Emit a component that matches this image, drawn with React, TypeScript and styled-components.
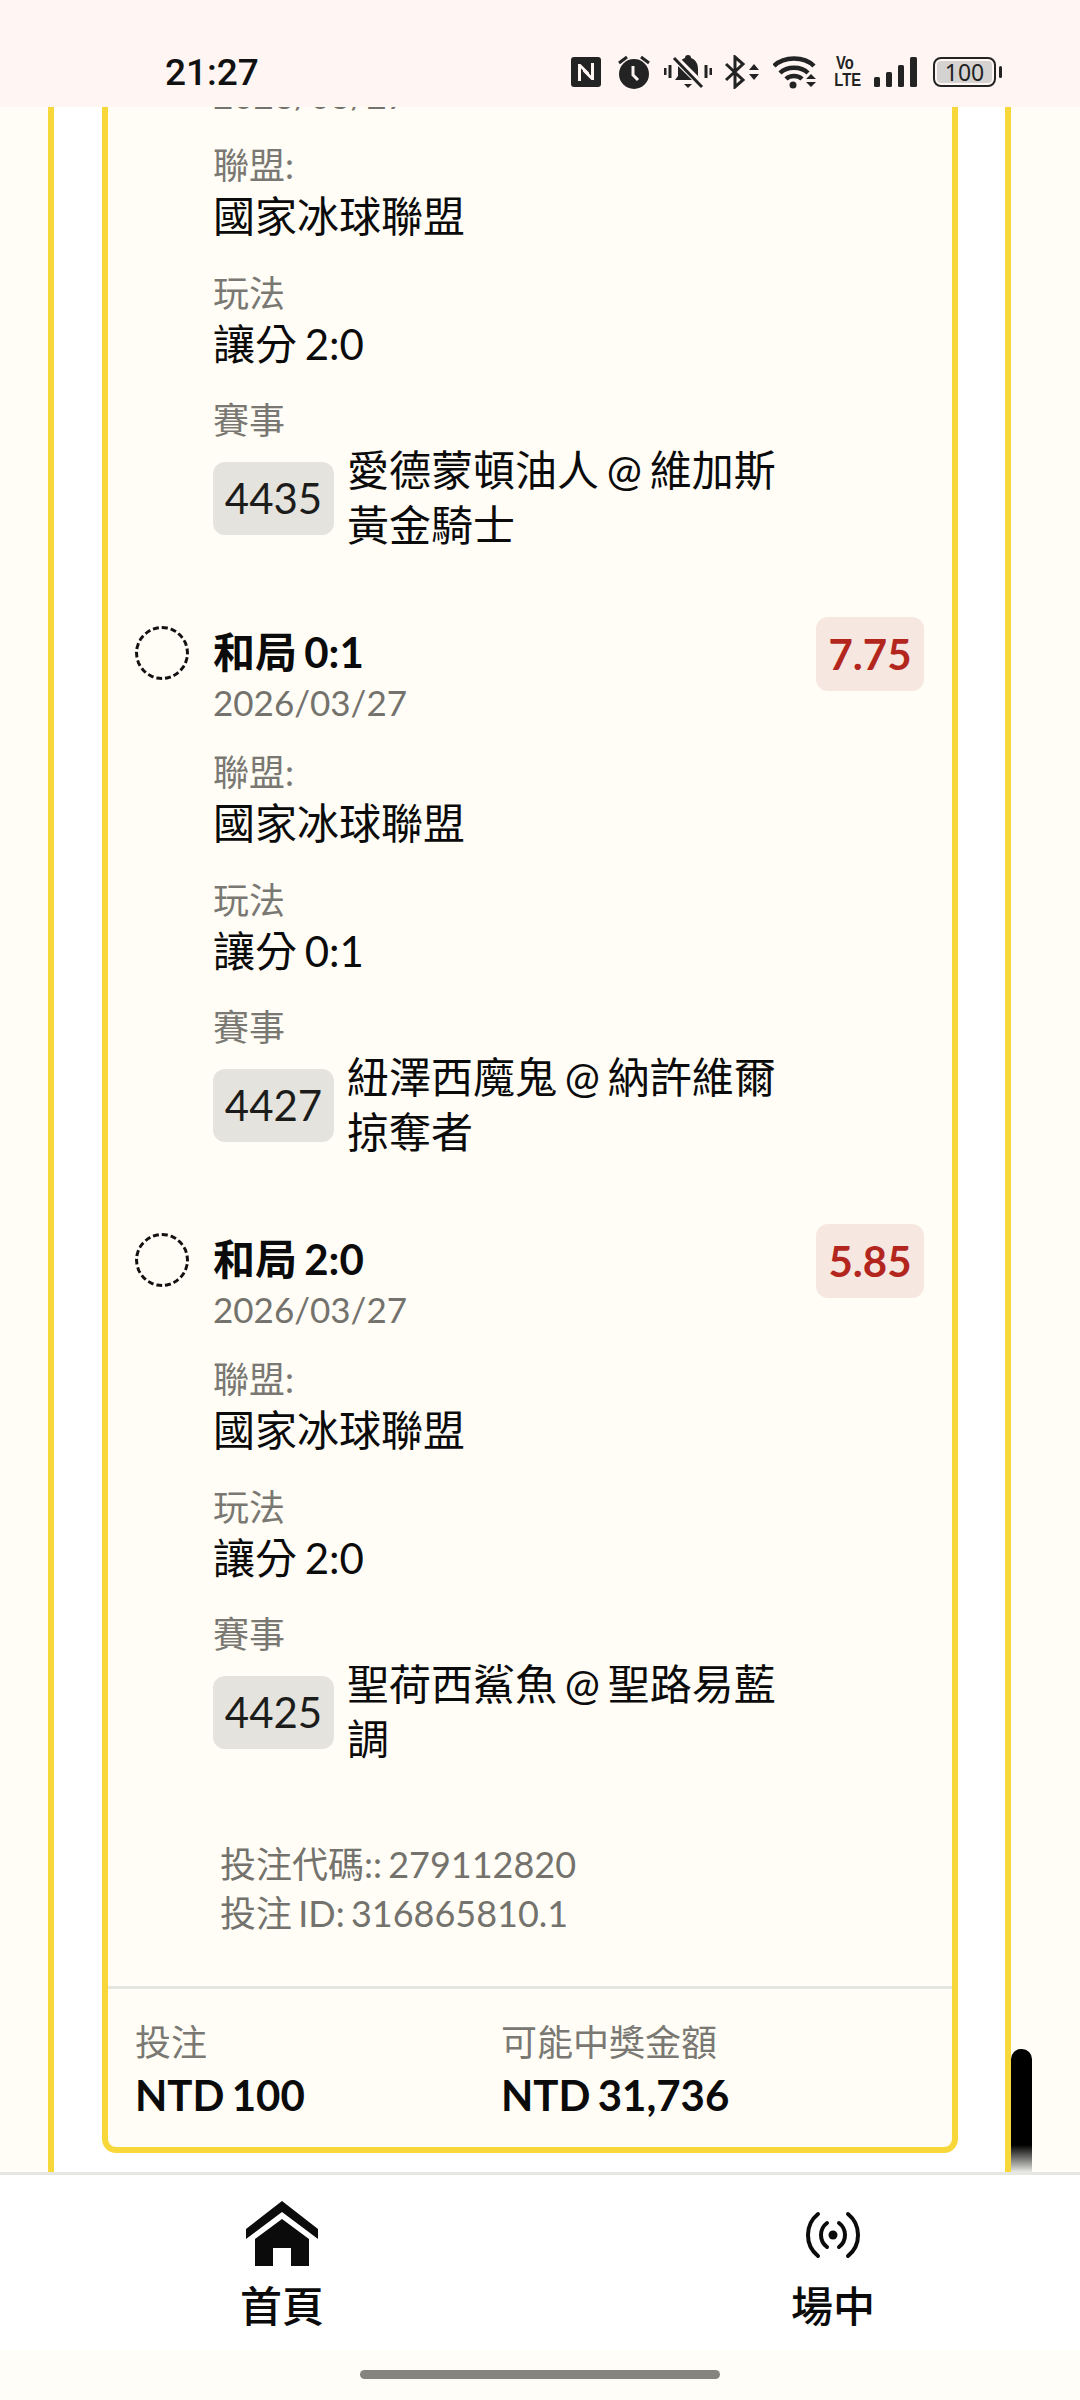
import React from "react";
import styled, { createGlobalStyle } from "styled-components";

const GlobalStyle = createGlobalStyle`
  html, body { margin: 0; padding: 0; background: #fffdf6; }
  body { font-family: Lato, "Noto Sans CJK TC", sans-serif; word-spacing: -3px; }
  * { box-sizing: border-box; }
`;

const YELLOW = "#f8d73a";
const ICON = "#232323";

const Page = styled.div`
  width: 1080px;
  height: 2400px;
  display: flex;
  flex-direction: column;
  overflow: hidden;
  background: #fffdf6;
`;

const StatusBar = styled.header`
  position: relative;
  z-index: 1;
  flex: 0 0 107px;
  display: flex;
  align-items: center;
  justify-content: space-between;
  padding: 37px 77px 0 165px;
  background: #fff6f4;
`;

const Clock = styled.span`
  font-family: Roboto, sans-serif;
  font-size: 37px;
  font-weight: 500;
  color: #111;
`;

const StatusIcons = styled.div`
  display: flex;
  align-items: center;
`;

const StatusGlyph = styled.svg<{ $ml: number }>`
  display: block;
  margin-left: ${(p) => p.$ml}px;
  flex: none;
`;

const VoLte = styled.div`
  width: 26px;
  margin-left: 13px;
  font-family: "Liberation Sans", sans-serif;
  font-weight: 700;
  font-size: 18px;
  line-height: 17px;
  text-align: center;
  color: ${ICON};
`;

const VoLteLine = styled.div`
  transform: scaleX(0.82);
`;

const Battery = styled.div`
  position: relative;
  width: 63px;
  height: 30px;
  margin: 0 7px 0 16px;
  border: 2.5px solid ${ICON};
  border-radius: 8px;
  padding: 2px;
  &::after {
    content: "";
    position: absolute;
    right: -8px;
    top: 7px;
    width: 3px;
    height: 12px;
    border-radius: 2px;
    background: ${ICON};
  }
`;

const BatteryFill = styled.div`
  height: 100%;
  border-radius: 4px;
  background: #d5d3d2;
  display: flex;
  align-items: center;
  justify-content: center;
  font-family: "Noto Sans", sans-serif;
  font-size: 23px;
  color: #222;
`;

const Main = styled.main`
  flex: 1;
  min-height: 0;
  position: relative;
  display: flex;
  flex-direction: column;
  justify-content: flex-end;
  overflow: hidden;
`;

const Panel = styled.section`
  flex: none;
  width: 963px;
  margin-left: 48px;
  padding: 0 47px 19px 48px;
  background: #fff;
  border-left: 6px solid ${YELLOW};
  border-right: 6px solid ${YELLOW};
`;

const Card = styled.article`
  width: 856px;
  background: #fffdf6;
  border: 6px solid ${YELLOW};
  border-radius: 14px;
`;

const Items = styled.div`
  display: flex;
  flex-direction: column;
  gap: 73px;
  padding: 0 28px 0 27px;
`;

const Item = styled.div`
  display: flex;
  align-items: flex-start;
  gap: 24px;
`;

const Radio = styled.span`
  flex: none;
  width: 54px;
  height: 54px;
  border: 3px dashed #111;
  border-radius: 50%;
`;

const Body = styled.div`
  flex: 1;
  min-width: 0;
`;

const Head = styled.div`
  display: flex;
  justify-content: space-between;
  align-items: flex-start;
`;

const Title = styled.div`
  min-height: 52px;
  font-size: 42px;
  line-height: 52px;
  font-weight: 700;
  color: #0b0b0b;
`;

const DateText = styled.div`
  font-size: 35px;
  line-height: 48px;
  color: #74726c;
`;

const Odds = styled.div`
  width: 108px;
  height: 74px;
  margin-top: -9px;
  display: flex;
  align-items: center;
  justify-content: center;
  border-radius: 12px;
  background: #f6e7e1;
  color: #b3261e;
  font-size: 42px;
  font-weight: 700;
`;

const Field = styled.div<{ $top: number }>`
  margin-top: ${(p) => p.$top}px;
`;

const Label = styled.div`
  font-size: 36px;
  line-height: 48px;
  color: #7a7872;
`;

const Value = styled.div`
  margin-top: 1px;
  font-size: 42px;
  line-height: 52px;
  color: #0b0b0b;
`;

const EventRow = styled.div`
  display: flex;
  align-items: center;
  gap: 13px;
  margin-top: -1px;
`;

const Pill = styled.span`
  flex: none;
  width: 121px;
  height: 73px;
  display: flex;
  align-items: center;
  justify-content: center;
  border-radius: 12px;
  background: #e4e3de;
  color: #1c1c1a;
  font-size: 42px;
`;

const EventName = styled.div`
  max-width: 445px;
  font-size: 42px;
  line-height: 55px;
  color: #0b0b0b;
`;

const Codes = styled.div`
  margin-top: 73px;
  padding-left: 112px;
  font-size: 36px;
  line-height: 49px;
  color: #74726c;
`;

const Divider = styled.hr`
  margin: 48px 0 0;
  border: 0;
  height: 3px;
  background: #e6e6e1;
`;

const Summary = styled.div`
  display: grid;
  grid-template-columns: 366px 1fr;
  padding: 29px 27px 23px;
`;

const SummaryValue = styled.div`
  font-size: 42px;
  line-height: 58px;
  font-weight: 700;
  color: #0b0b0b;
`;

const SummaryLabel = styled.div`
  font-size: 36px;
  line-height: 48px;
  color: #7a7872;
`;

const ScrollThumb = styled.div`
  position: absolute;
  left: 1011px;
  bottom: 0;
  width: 21px;
  height: 123px;
  border-radius: 10px 10px 0 0;
  background: linear-gradient(to bottom, #000 0%, #000 78%, #e8e8e4 100%);
`;

const Nav = styled.nav`
  flex: 0 0 228px;
  display: flex;
  flex-direction: column;
  border-top: 3px solid #e6e6e3;
  background: #fff;
`;

const NavItems = styled.div`
  flex: 1;
  display: flex;
  gap: 431px;
  padding-left: 222px;
`;

const NavItem = styled.div<{ $top: number }>`
  width: 120px;
  display: flex;
  flex-direction: column;
  align-items: center;
  padding-top: ${(p) => p.$top}px;
`;

const NavLabel = styled.span<{ $top: number }>`
  margin-top: ${(p) => p.$top}px;
  font-size: 42px;
  line-height: 52px;
  font-weight: 500;
  color: #0b0b0b;
`;

const GestureArea = styled.div`
  flex: 0 0 50px;
  display: flex;
  justify-content: center;
  padding-top: 20px;
  background: #fffdf8;
`;

const GestureBar = styled.div`
  width: 360px;
  height: 9px;
  border-radius: 5px;
  background: #85847e;
`;

const NfcIcon = () => (
  <StatusGlyph $ml={0} width="30" height="30" viewBox="0 0 30 30">
    <rect width="30" height="30" rx="3" fill={ICON} />
    <path d="M7 24V7h2.500L18 15.500V19.500L10 11.500V24z" fill="#fff6f4" />
    <path d="M23 6v17h-2.500L12 14.500V10.500l8 8V6z" fill="#fff6f4" />
  </StatusGlyph>
);

const AlarmIcon = () => (
  <StatusGlyph $ml={17} width="32" height="34" viewBox="0 0 32 34">
    <circle cx="16" cy="19" r="15" fill={ICON} />
    <path d="M1 8l8-6M31 8l-8-6" stroke={ICON} strokeWidth="3" />
    <path d="M15 11v9l5 5" stroke="#fff6f4" strokeWidth="3" fill="none" />
  </StatusGlyph>
);

const MuteIcon = () => (
  <StatusGlyph $ml={14} width="48" height="34" viewBox="0 0 48 34">
    <path d="M24 0c2 0 3 1 3 3 5 2 7 6 7 11v7l3 4H11l3-4v-7c0-5 2-9 7-11 0-2 1-3 3-3z" fill={ICON} />
    <path d="M20 29h8l-4 4z" fill={ICON} />
    <path d="M1 13v7M6 10v13M42 10v13M47 13v7" stroke={ICON} strokeWidth="3" />
    <path d="M9 1l29 29" stroke="#fff6f4" strokeWidth="7" />
    <path d="M10 3l28 29" stroke={ICON} strokeWidth="3" />
  </StatusGlyph>
);

const BluetoothIcon = () => (
  <StatusGlyph $ml={13} width="34" height="34" viewBox="0 0 34 34">
    <path d="M1 9l17 16-8 7V2l8 7L1 25" stroke={ICON} strokeWidth="3" fill="none" />
    <path d="M24 15l5-6 5 6zM24 19h10l-5 6z" fill={ICON} />
  </StatusGlyph>
);

const WifiIcon = () => (
  <StatusGlyph $ml={14} width="46" height="34" viewBox="0 0 46 34">
    <path d="M1 11c10-10 30-10 40 0M7 18c7-7 21-7 28 0M13 24c4-4 12-4 16 0" stroke={ICON} strokeWidth="4.500" fill="none" />
    <circle cx="20" cy="30" r="3.500" fill={ICON} />
    <path d="M33 24l5-5 5 5zM33 27h10l-5 5z" fill={ICON} />
  </StatusGlyph>
);

const SignalIcon = () => (
  <StatusGlyph $ml={16} width="43" height="30" viewBox="0 0 43 30">
    <rect x="0" y="20" width="6" height="10" rx="1.500" fill={ICON} />
    <rect x="12" y="15" width="6" height="15" rx="1.500" fill={ICON} />
    <rect x="24" y="8" width="6" height="22" rx="1.500" fill={ICON} />
    <rect x="36" y="0" width="7" height="30" rx="1.500" fill={ICON} />
  </StatusGlyph>
);

const HomeIcon = () => (
  <svg width="72" height="66" viewBox="0 0 72 66" style={{ display: "block" }}>
    <path d="M36 0L72 28V38L36 11L0 38V28Z" fill="#0b0b0b" />
    <path d="M36 18L63 38V65H45V47H27V65H9V38Z" fill="#0b0b0b" />
  </svg>
);

const LiveIcon = () => (
  <svg width="60" height="50" viewBox="0 0 60 50" style={{ display: "block" }}>
    <circle cx="30" cy="25" r="4.500" fill="#0b0b0b" />
    <path
      d="M15 4A27 27 0 0 0 15 46M45 4A27 27 0 0 1 45 46M24 13A15 15 0 0 0 24 37M36 13A15 15 0 0 1 36 37"
      stroke="#0b0b0b"
      strokeWidth="4"
      strokeLinecap="round"
      fill="none"
    />
  </svg>
);

type Bet = {
  title?: string;
  odds?: string;
  handicap: string;
  code: string;
  event: string;
};

const bets: Bet[] = [
  { handicap: "讓分 2:0", code: "4435", event: "愛德蒙頓油人 @ 維加斯黃金騎士" },
  { title: "和局 0:1", odds: "7.75", handicap: "讓分 0:1", code: "4427", event: "紐澤西魔鬼 @ 納許維爾掠奪者" },
  { title: "和局 2:0", odds: "5.85", handicap: "讓分 2:0", code: "4425", event: "聖荷西鯊魚 @ 聖路易藍調" },
];

export default function App() {
  return (
    <Page lang="zh-Hant">
      <GlobalStyle />
      <StatusBar>
        <Clock>21:27</Clock>
        <StatusIcons>
          <NfcIcon />
          <AlarmIcon />
          <MuteIcon />
          <BluetoothIcon />
          <WifiIcon />
          <VoLte>
            <VoLteLine>Vo</VoLteLine>
            <VoLteLine>LTE</VoLteLine>
          </VoLte>
          <SignalIcon />
          <Battery>
            <BatteryFill>100</BatteryFill>
          </Battery>
        </StatusIcons>
      </StatusBar>
      <Main>
        <Panel>
          <Card>
            <Items>
              {bets.map((bet) => (
                <Item key={bet.code}>
                  <Radio />
                  <Body>
                    <Head>
                      <div>
                        <Title>{bet.title}</Title>
                        <DateText>2026/03/27</DateText>
                      </div>
                      {bet.odds && <Odds>{bet.odds}</Odds>}
                    </Head>
                    <Field $top={22}>
                      <Label>聯盟:</Label>
                      <Value>國家冰球聯盟</Value>
                    </Field>
                    <Field $top={27}>
                      <Label>玩法</Label>
                      <Value>{bet.handicap}</Value>
                    </Field>
                    <Field $top={26}>
                      <Label>賽事</Label>
                      <EventRow>
                        <Pill>{bet.code}</Pill>
                        <EventName>{bet.event}</EventName>
                      </EventRow>
                    </Field>
                  </Body>
                </Item>
              ))}
            </Items>
            <Codes>
              投注代碼:: 279112820
              <br />
              投注 ID: 316865810.1
            </Codes>
            <Divider />
            <Summary>
              <div>
                <SummaryLabel>投注</SummaryLabel>
                <SummaryValue>NTD 100</SummaryValue>
              </div>
              <div>
                <SummaryLabel>可能中獎金額</SummaryLabel>
                <SummaryValue>NTD 31,736</SummaryValue>
              </div>
            </Summary>
          </Card>
        </Panel>
        <ScrollThumb />
      </Main>
      <Nav>
        <NavItems>
          <NavItem $top={26}>
            <HomeIcon />
            <NavLabel $top={13}>首頁</NavLabel>
          </NavItem>
          <NavItem $top={35}>
            <LiveIcon />
            <NavLabel $top={20}>場中</NavLabel>
          </NavItem>
        </NavItems>
        <GestureArea>
          <GestureBar />
        </GestureArea>
      </Nav>
    </Page>
  );
}
